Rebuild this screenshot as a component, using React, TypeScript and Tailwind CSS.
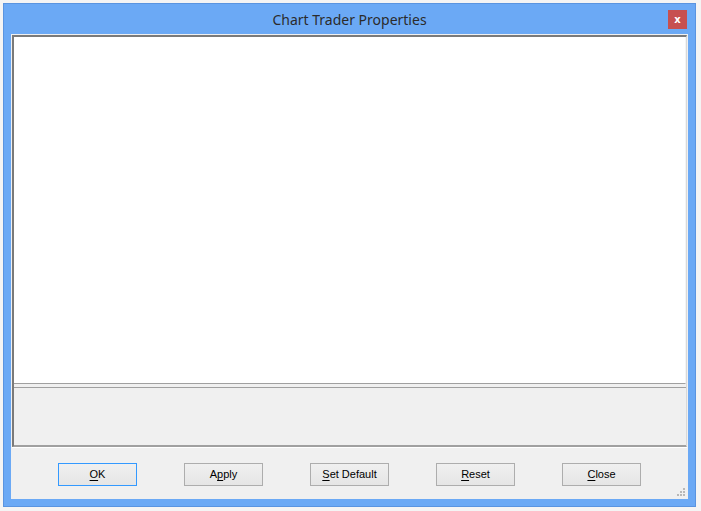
import React from 'react';

const buttons = [
  { pre: '', key: 'O', post: 'K', focused: true },
  { pre: 'A', key: 'p', post: 'ply' },
  { pre: '', key: 'S', post: 'et Default' },
  { pre: '', key: 'R', post: 'eset' },
  { pre: '', key: 'C', post: 'lose' },
];

const SizeGrip = () => (
  <svg className="absolute right-[2px] bottom-[2px]" width="9" height="9" viewBox="0 0 9 9">
    <rect x="6" y="0" width="2" height="2" fill="#b8b8b8" />
    <rect x="3" y="3" width="2" height="2" fill="#b8b8b8" />
    <rect x="6" y="3" width="2" height="2" fill="#b8b8b8" />
    <rect x="0" y="6" width="2" height="2" fill="#b8b8b8" />
    <rect x="3" y="6" width="2" height="2" fill="#b8b8b8" />
    <rect x="6" y="6" width="2" height="2" fill="#b8b8b8" />
  </svg>
);

export default function App() {
  return (
    <div className="w-[701px] h-[511px] bg-[#f4f4f4] pt-[3px] pl-[3px]">
      <div className="w-[693px] h-[504px] border border-[#5a94e0] bg-[#6ba9f5] flex flex-col">
        {/* title bar */}
        <div className="relative h-[30px] pt-[2px] flex items-center justify-center shrink-0">
          <span
            className="text-[14px] text-[#2b2b2b] leading-none"
            style={{ fontFamily: '"Segoe UI", "Noto Sans", sans-serif' }}
          >
            Chart Trader Properties
          </span>
          <div className="absolute right-[8px] top-[6px] w-[19px] h-[19px] bg-[#c75050] flex items-center justify-center">
            <span className="text-white text-[10px] font-bold leading-none" style={{ fontFamily: '"DejaVu Sans", sans-serif' }}>
              x
            </span>
          </div>
        </div>

        {/* client area */}
        <div className="relative mx-[7px] mb-[7px] flex-1 bg-[#f0f0f0] flex flex-col">
          <div className="mt-[1px] mx-[1px] h-[412px] flex flex-col border-t-2 border-l-2 border-t-[#7a7a7a] border-l-[#7a7a7a] border-r border-b border-r-[#d8d8d8] border-b-[#a0a0a0]">
            <div className="h-[347px] bg-white border-b border-[#a0a0a0] border-r border-r-[#f4f4f4]" />
            <div className="h-[3px]" />
            <div className="flex-1 bg-[#f0f0f0] border-t border-b border-[#a0a0a0]" />
          </div>
          <div className="h-px bg-white mx-[1px]" />

          <div
            className="flex justify-evenly mt-[15px] text-[11px] text-black"
            style={{ fontFamily: '"Liberation Sans", Arial, sans-serif' }}
          >
            {buttons.map((b, i) => (
              <div
                key={i}
                className={`w-[79px] h-[23px] flex items-center justify-center border bg-linear-to-b from-[#f0f0f0] to-[#e5e5e5] ${
                  b.focused ? 'border-[#3399ff]' : 'border-[#adadad]'
                }`}
              >
                {b.pre}
                <span className="underline underline-offset-[2px]">{b.key}</span>
                {b.post}
              </div>
            ))}
          </div>
          <SizeGrip />
        </div>
      </div>
    </div>
  );
}
